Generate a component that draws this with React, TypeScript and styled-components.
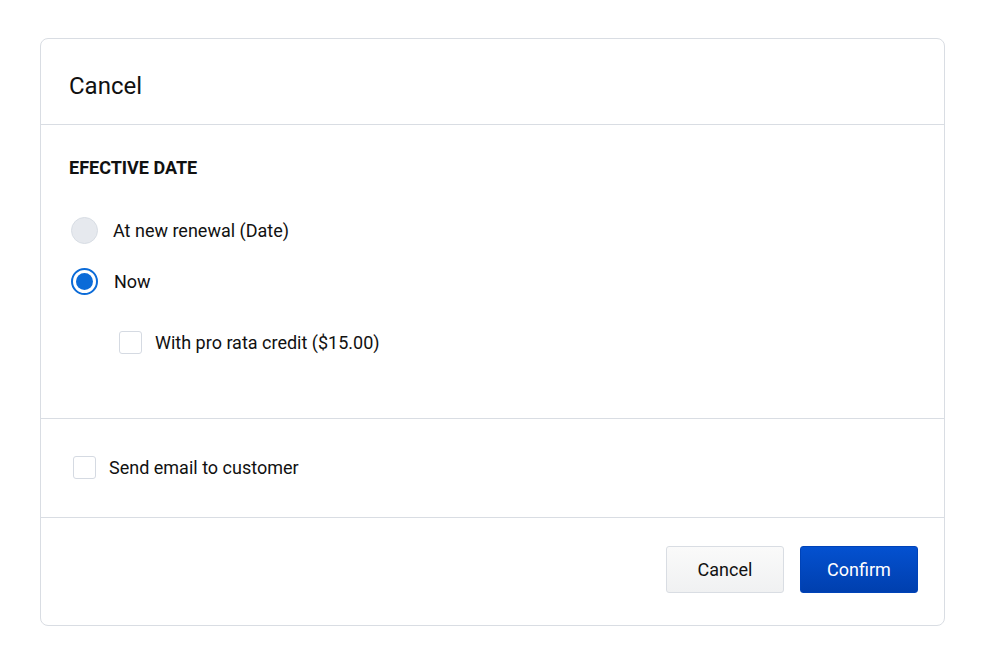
import React, { useState } from "react";
import styled, { createGlobalStyle } from "styled-components";

const Global = createGlobalStyle`
  html, body { margin: 0; padding: 0; background: #ffffff; }
  body { font-family: Roboto, "Noto Sans", Arial, sans-serif; color: #111; }
`;

const Page = styled.div`
  padding: 38px 55px 25px 40px;
`;

const Card = styled.div`
  border: 1px solid #d9dde3;
  border-radius: 8px;
  background: #fff;
  width: 903px;
`;

const Header = styled.div`
  height: 85px;
  display: flex;
  align-items: center;
  padding: 0 28px;
  border-bottom: 1px solid #d9dde3;
`;

const Title = styled.h1`
  margin: 0;
  font-size: 24px;
  font-weight: 400;
  color: #111;
  padding-top: 9px;
`;

const Section = styled.div<{ $h: number }>`
  height: ${(p) => p.$h}px;
  box-sizing: border-box;
  border-bottom: 1px solid #d9dde3;
  padding: 0 28px;
  display: flex;
  flex-direction: column;
`;

const SectionTitle = styled.h2`
  margin: 32px 0 0;
  font-size: 18px;
  font-weight: 700;
  line-height: 22px;
`;

const Options = styled.div`
  margin-top: 26px;
  display: flex;
  flex-direction: column;
`;

const Row = styled.label<{ $indent?: number; $gap: number; $h: number }>`
  display: flex;
  align-items: center;
  gap: ${(p) => p.$gap}px;
  margin-left: ${(p) => p.$indent ?? 0}px;
  height: ${(p) => p.$h}px;
  font-size: 18px;
  color: #111;
  cursor: pointer;
`;

const Radio = styled.span<{ $checked: boolean }>`
  width: 27px;
  height: 27px;
  box-sizing: border-box;
  border-radius: 50%;
  flex: none;
  margin-left: 2px;
  border: ${(p) => (p.$checked ? "2px solid #0b6bd8" : "1px solid #d8dde4")};
  background: ${(p) => (p.$checked ? "#fff" : "#e6e9ee")};
  display: flex;
  align-items: center;
  justify-content: center;
  &::after {
    content: "";
    display: ${(p) => (p.$checked ? "block" : "none")};
    width: 17px;
    height: 17px;
    border-radius: 50%;
    background: #0b6bd8;
  }
`;

const Box = styled.span`
  width: 23px;
  height: 23px;
  box-sizing: border-box;
  border: 1px solid #d5dae2;
  border-radius: 3px;
  background: #fff;
  flex: none;
`;

const Footer = styled.div`
  height: 107px;
  box-sizing: border-box;
  padding: 0 26px 4px;
  display: flex;
  align-items: center;
  justify-content: flex-end;
  gap: 16px;
`;

const Button = styled.button<{ $primary?: boolean }>`
  width: 118px;
  height: 47px;
  border-radius: 3px;
  font-family: Roboto, Arial, sans-serif;
  font-size: 18px;
  cursor: pointer;
  border: 1px solid ${(p) => (p.$primary ? "#0043b8" : "#d9dde3")};
  color: ${(p) => (p.$primary ? "#fff" : "#111")};
  background: ${(p) =>
    p.$primary
      ? "linear-gradient(#0451d0, #003fae)"
      : "linear-gradient(#fafafa, #f0f1f2)"};
`;

export default function App() {
  const [choice, setChoice] = useState<"renewal" | "now">("now");
  const [proRata, setProRata] = useState(false);
  const [email, setEmail] = useState(false);
  return (
    <Page>
      <Global />
      <Card>
        <Header>
          <Title>Cancel</Title>
        </Header>
        <Section $h={294}>
          <SectionTitle>EFECTIVE DATE</SectionTitle>
          <Options>
            <Row $gap={15} $h={51} onClick={() => setChoice("renewal")}>
              <Radio $checked={choice === "renewal"} />
              At new renewal (Date)
            </Row>
            <Row $gap={16} $h={51} onClick={() => setChoice("now")}>
              <Radio $checked={choice === "now"} />
              Now
            </Row>
            <Row $indent={50} $gap={13} $h={70} onClick={() => setProRata(!proRata)}>
              <Box />
              With pro rata credit ($15.00)
            </Row>
          </Options>
        </Section>
        <Section $h={99}>
          <Row $indent={4} $gap={13} $h={96} onClick={() => setEmail(!email)}>
            <Box />
            Send email to customer
          </Row>
        </Section>
        <Footer>
          <Button>Cancel</Button>
          <Button $primary>Confirm</Button>
        </Footer>
      </Card>
    </Page>
  );
}
